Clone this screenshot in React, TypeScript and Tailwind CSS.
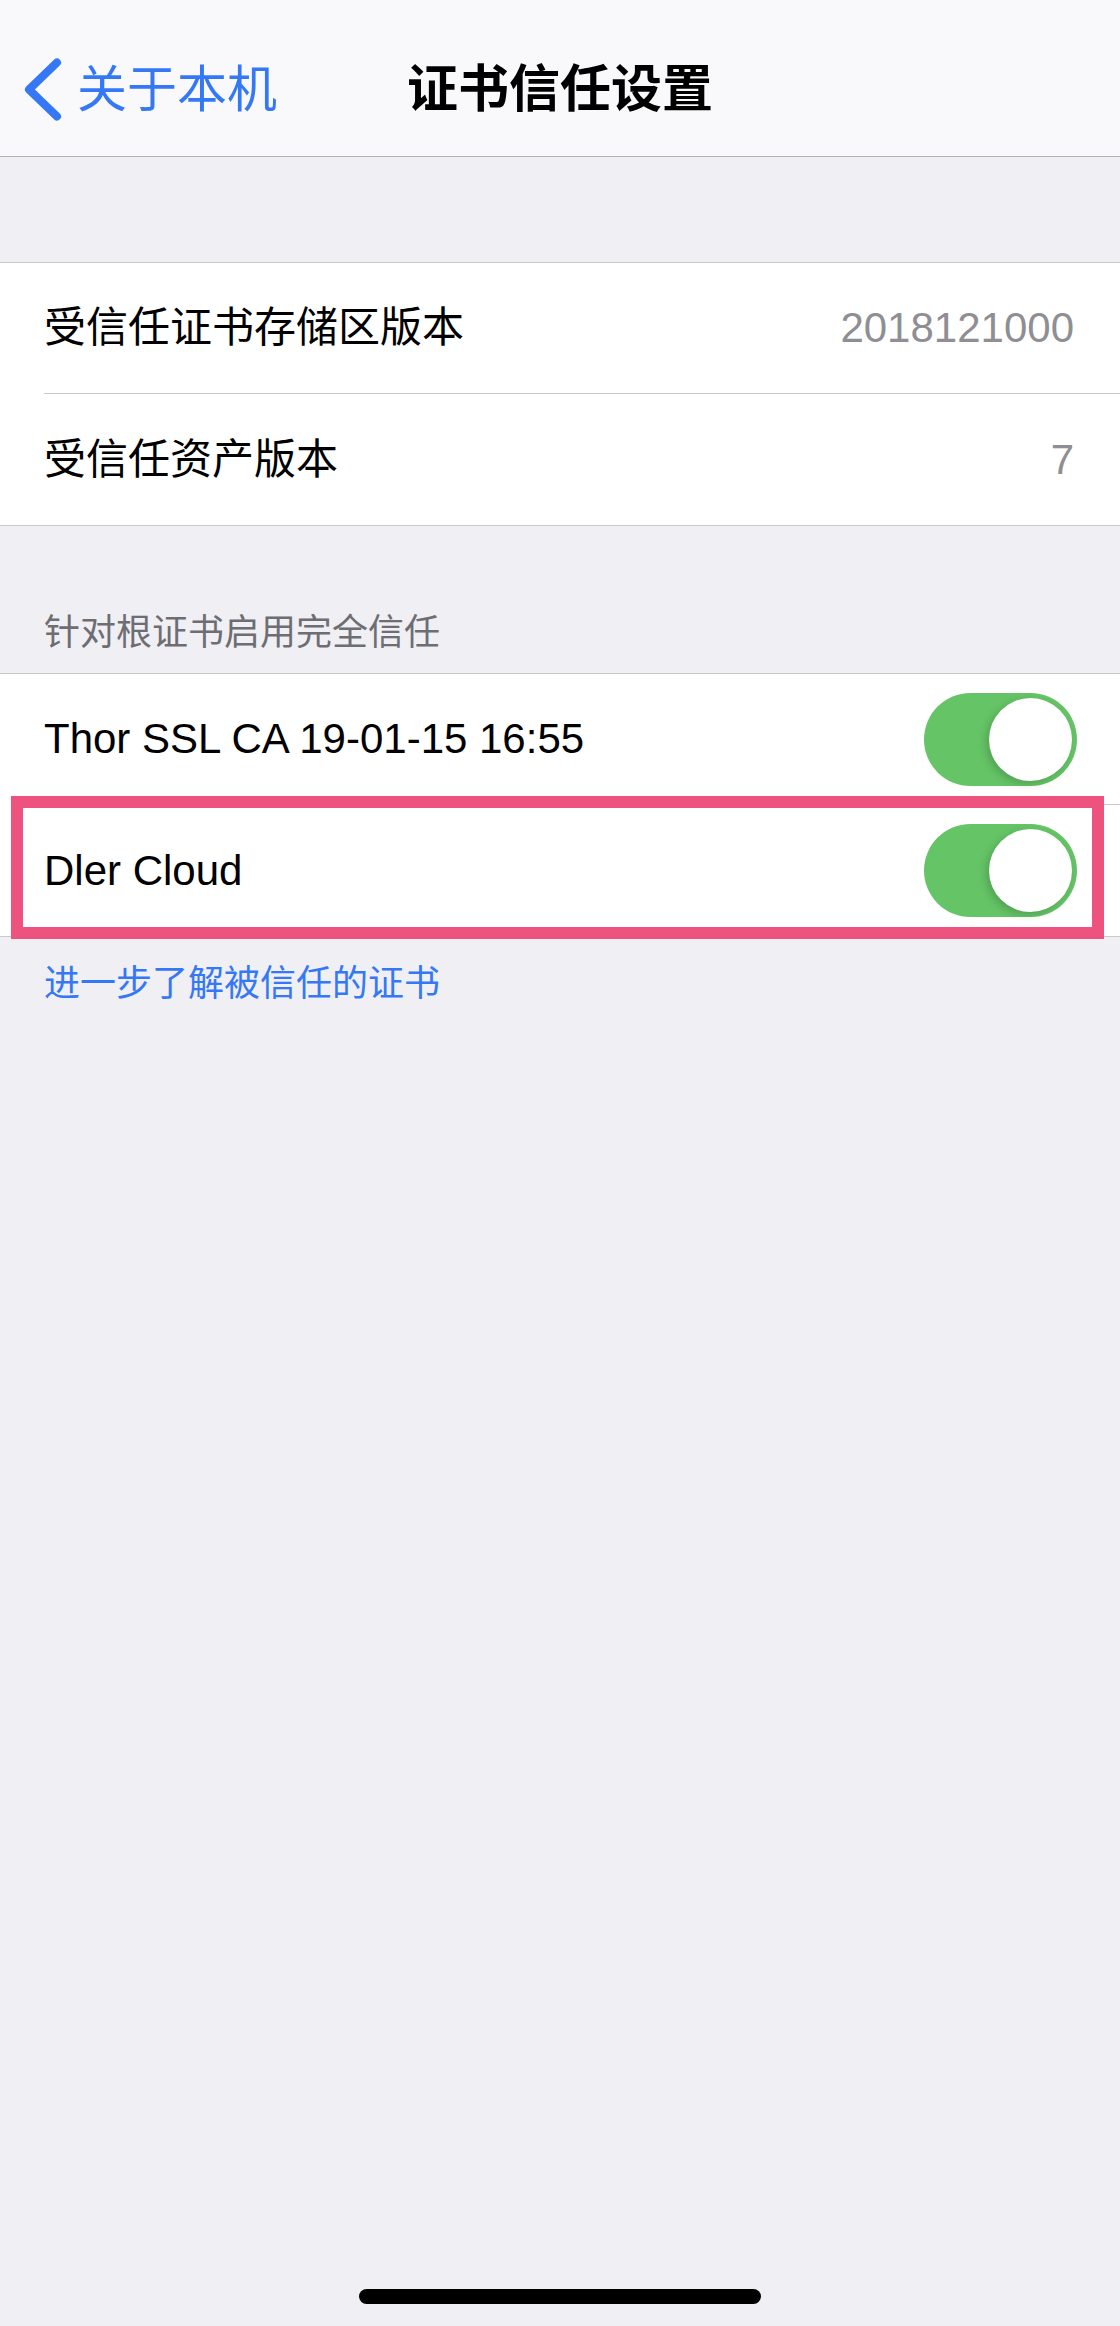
import React from "react";

const font = { fontFamily: '"Liberation Sans", "Noto Sans CJK SC", sans-serif' };

function Toggle() {
  return (
    <div className="relative h-[93px] w-[153px] shrink-0 rounded-full bg-[#65c466]">
      <div className="absolute right-[5px] top-[5px] h-[83px] w-[83px] rounded-full bg-white shadow-[-3px_3px_8px_rgba(0,0,0,0.18)]" />
    </div>
  );
}

function Row({ label, value, toggle, last }: { label: string; value?: string; toggle?: boolean; last?: boolean }) {
  return (
    <div className="pl-[44px]">
      <div className={`flex h-[131px] items-center justify-between pr-[43px] ${last ? "" : "border-b border-[#c8c7cc]"}`}>
        <span className="text-[42px] leading-[50px] text-black">{label}</span>
        {value && <span className="pr-[3px] text-[42px] leading-[50px] text-[#8e8e93]">{value}</span>}
        {toggle && <Toggle />}
      </div>
    </div>
  );
}

export default function App() {
  return (
    <div className="relative min-h-[2326px] w-full bg-[#efeff4]" style={font}>
      {/* Nav bar */}
      <div className="grid h-[157px] grid-cols-[1fr_auto_1fr] items-center border-b border-[#b3b3b6] bg-[#f9f9fb] pt-[23px]">
        <div className="flex items-center gap-[15px] pl-[24px]">
          <svg width="38" height="63" viewBox="0 0 38 63" fill="none">
            <path d="M33 4.5 L5 31.5 L33 58.5" stroke="#3478f6" strokeWidth="8" strokeLinecap="round" strokeLinejoin="round" />
          </svg>
          <span className="text-[50px] leading-[60px] text-[#3478f6]">关于本机</span>
        </div>
        <div className="text-[51px] font-semibold leading-[60px] text-black">证书信任设置</div>
        <div />
      </div>

      {/* Group 1 */}
      <div className="mt-[105px] border-y border-[#c8c7cc] bg-white">
        <Row label="受信任证书存储区版本" value="2018121000" />
        <Row label="受信任资产版本" value="7" last />
      </div>

      {/* Group 2 header */}
      <div className="flex h-[147px] items-end pb-[18px] pl-[44px]">
        <span className="text-[36px] leading-[44px] text-[#6d6d72]">针对根证书启用完全信任</span>
      </div>

      {/* Group 2 */}
      <div className="border-y border-[#c8c7cc] bg-white">
        <Row label="Thor SSL CA 19-01-15 16:55" toggle />
        <Row label="Dler Cloud" toggle last />
      </div>

      <div className="pl-[44px] pt-[25px]">
        <span className="text-[36px] leading-[44px] text-[#3478f6]">进一步了解被信任的证书</span>
      </div>

      {/* Highlight annotation */}
      <div className="pointer-events-none absolute left-[11px] top-[796px] h-[143px] w-[1093px] border-[12px] border-[#ee527e]" />

      {/* Home indicator */}
      <div className="absolute left-[359px] top-[2289px] h-[15px] w-[402px] rounded-full bg-black" />
    </div>
  );
}
